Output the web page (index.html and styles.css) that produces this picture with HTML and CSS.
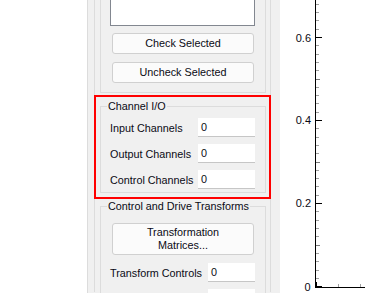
FILE: index.html
```html
<!DOCTYPE html>
<html>
<head>
<meta charset="utf-8">
<link rel="stylesheet" href="styles.css">
</head>
<body>
<div class="screen">
  <div class="blank"></div>
  <div class="panel">
    <div class="outer">
      <div class="group top-group">
        <div class="listbox"></div>
        <button class="btn first">Check Selected</button>
        <button class="btn">Uncheck Selected</button>
      </div>
      <fieldset class="fs io">
        <legend>Channel I/O</legend>
        <div class="row"><span class="label">Input Channels</span><span class="field">0</span></div>
        <div class="row"><span class="label">Output Channels</span><span class="field">0</span></div>
        <div class="row"><span class="label">Control Channels</span><span class="field">0</span></div>
      </fieldset>
      <fieldset class="fs transforms">
        <legend>Control and Drive Transforms</legend>
        <button class="btn tall">Transformation<br>Matrices...</button>
        <div class="row"><span class="label">Transform Controls</span><span class="field short">0</span></div>
        <div class="row"><span class="label"></span><span class="field short"></span></div>
      </fieldset>
    </div>
    <div class="highlight"></div>
  </div>
  <div class="plot">
    <svg width="85" height="293" viewBox="0 0 85 293">
      <g stroke="#a0a0a0" stroke-width="1" shape-rendering="crispEdges">
        <line x1="36" x2="39" y1="278.5" y2="278.5"/>
        <line x1="36" x2="39" y1="270.5" y2="270.5"/>
        <line x1="36" x2="39" y1="261.5" y2="261.5"/>
        <line x1="36" x2="39" y1="253.5" y2="253.5"/>
        <line x1="36" x2="39" y1="236.5" y2="236.5"/>
        <line x1="36" x2="39" y1="228.5" y2="228.5"/>
        <line x1="36" x2="39" y1="220.5" y2="220.5"/>
        <line x1="36" x2="39" y1="211.5" y2="211.5"/>
        <line x1="36" x2="39" y1="195.5" y2="195.5"/>
        <line x1="36" x2="39" y1="186.5" y2="186.5"/>
        <line x1="36" x2="39" y1="178.5" y2="178.5"/>
        <line x1="36" x2="39" y1="170.5" y2="170.5"/>
        <line x1="36" x2="39" y1="153.5" y2="153.5"/>
        <line x1="36" x2="39" y1="145.5" y2="145.5"/>
        <line x1="36" x2="39" y1="137.5" y2="137.5"/>
        <line x1="36" x2="39" y1="128.5" y2="128.5"/>
        <line x1="36" x2="39" y1="112.5" y2="112.5"/>
        <line x1="36" x2="39" y1="103.5" y2="103.5"/>
        <line x1="36" x2="39" y1="95.5" y2="95.5"/>
        <line x1="36" x2="39" y1="87.5" y2="87.5"/>
        <line x1="36" x2="39" y1="70.5" y2="70.5"/>
        <line x1="36" x2="39" y1="62.5" y2="62.5"/>
        <line x1="36" x2="39" y1="54.5" y2="54.5"/>
        <line x1="36" x2="39" y1="45.5" y2="45.5"/>
        <line x1="36" x2="39" y1="29.5" y2="29.5"/>
        <line x1="36" x2="39" y1="20.5" y2="20.5"/>
        <line x1="36" x2="39" y1="12.5" y2="12.5"/>
        <line x1="36" x2="39" y1="4.5" y2="4.5"/>
        <line x1="58.5" x2="58.5" y1="284" y2="287"/>
        <line x1="80.5" x2="80.5" y1="284" y2="287"/>
      </g>
      <g stroke="#7a7a7a" stroke-width="1" shape-rendering="crispEdges">
        <line x1="36" x2="40" y1="245.5" y2="245.5"/>
        <line x1="36" x2="40" y1="162.5" y2="162.5"/>
        <line x1="36" x2="40" y1="79.5" y2="79.5"/>
      </g>
      <g stroke="#000" stroke-width="1" shape-rendering="crispEdges">
        <line x1="35.5" x2="35.5" y1="0" y2="288"/>
        <line x1="35" x2="85" y1="287.5" y2="287.5"/>
        <line x1="36" x2="42" y1="286.5" y2="286.5"/>
        <line x1="36.5" x2="36.5" y1="282" y2="287"/>
        <line x1="36" x2="42" y1="203.5" y2="203.5"/>
        <line x1="36" x2="42" y1="120.5" y2="120.5"/>
        <line x1="36" x2="42" y1="37.5" y2="37.5"/>
      </g>
      <g class="ticklabel" text-anchor="end">
        <text x="31" y="41.7">0.6</text>
        <text x="31" y="124.2">0.4</text>
        <text x="31" y="207.3">0.2</text>
        <text x="30.5" y="291.3">0</text>
      </g>
    </svg>
  </div>
</div>
</body>
</html>
```

FILE: styles.css
```css
html, body {
  margin: 0;
  padding: 0;
  background: #ffffff;
}

body {
  font-family: "Liberation Sans", Arial, sans-serif;
  font-size: 10.8px;
  color: #0a0a14;
}

.screen {
  display: flex;
  width: 365px;
  height: 293px;
  overflow: hidden;
}

.blank {
  width: 87px;
  flex: none;
  background: #ffffff;
}

.panel {
  position: relative;
  width: 192px;
  flex: none;
  background: #f0f0f0;
  border-left: 1px solid #dcdcdc;
  overflow: hidden;
}

.outer {
  margin-left: 6px;
  width: 166px;
  height: 293px;
  border-left: 1px solid #dcdcdc;
  border-right: 1px solid #dcdcdc;
  padding: 0 4px 0 5px;
  box-sizing: content-box;
}

.group {
  border: 1px solid #dcdcdc;
  border-top: none;
  padding: 0 0 9px 0;
}

.listbox {
  margin: -1px 0 0 9px;
  width: 143px;
  height: 25px;
  background: #ffffff;
  border: 1px solid #828790;
}

.btn {
  display: block;
  box-sizing: border-box;
  margin: 8px 0 0 11px;
  width: 142px;
  height: 21px;
  padding: 0;
  border: 1px solid #d0d0d0;
  border-radius: 3px;
  background: #fbfbfb;
  font-family: inherit;
  font-size: inherit;
  color: inherit;
  line-height: 13px;
  text-align: center;
}

.btn.first {
  margin-top: 7px;
}

.fs {
  margin: 6px 0 0 0;
  padding: 0 10px 3px 9px;
  border: 1px solid #dcdcdc;
  min-width: 0;
}

.fs legend {
  margin-left: -3px;
  padding: 0 1px;
  line-height: 14px;
  height: 14px;
}

.io .row:first-of-type {
  margin-top: 5px;
}

.row {
  display: flex;
  align-items: center;
  justify-content: space-between;
  height: 19px;
  margin-top: 7px;
}

.label {
  white-space: nowrap;
}

.field {
  box-sizing: border-box;
  width: 57px;
  height: 19px;
  background: #ffffff;
  border-bottom: 1px solid #c6c6c6;
  padding-left: 3px;
  line-height: 18px;
}

.field.short {
  width: 47px;
}

.btn.tall {
  margin: 10px 0 0 2px;
  height: 32px;
  line-height: 13px;
}

.transforms .row {
  margin-top: 8px;
}

.transforms .row + .row {
  margin-top: 7px;
}

.highlight {
  position: absolute;
  left: 6px;
  top: 95px;
  width: 177px;
  height: 104px;
  box-sizing: border-box;
  border: 2px solid #ff0000;
}

.plot {
  flex: 1;
  background: #ffffff;
}

.plot svg {
  display: block;
}

.ticklabel text {
  font-family: "Liberation Sans", Arial, sans-serif;
  font-size: 11px;
  fill: #0a0a14;
}
```
